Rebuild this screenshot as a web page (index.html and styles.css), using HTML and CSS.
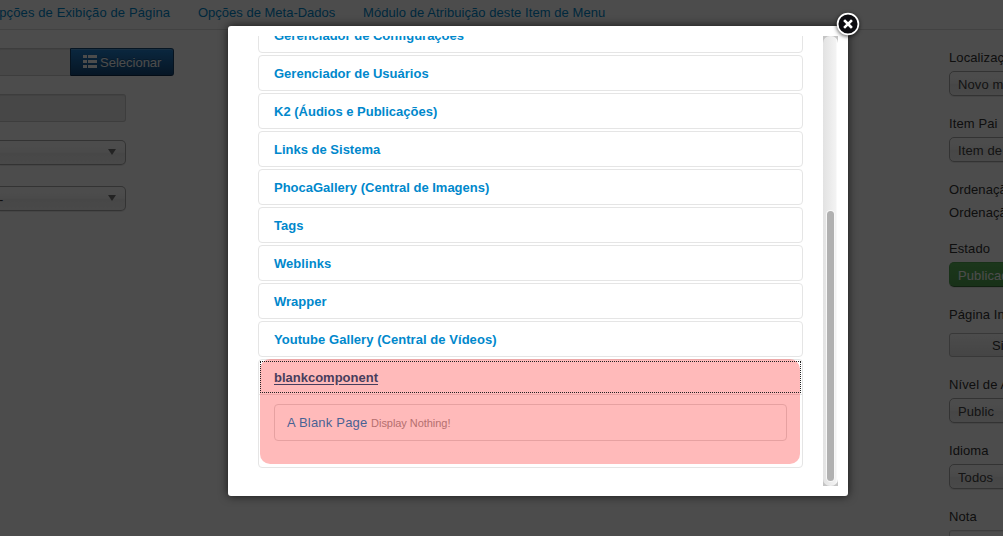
FILE: index.html
```html
<!DOCTYPE html>
<html lang="pt-BR">
<head>
<meta charset="utf-8">
<title>Gerenciador de Menus</title>
<link rel="stylesheet" href="styles.css">
</head>
<body>
<div class="page">
  <nav class="tabs">
    <a class="tab tab-display"><span>Opções de Exibição de Página</span></a>
    <a class="tab tab-meta"><span>Opções de Meta-Dados</span></a>
    <a class="tab tab-module"><span>Módulo de Atribuição deste Item de Menu</span></a>
  </nav>
  <div class="columns">
    <main class="fields">
      <div class="group">
        <div class="input group-input"></div>
        <button class="select-btn">
          <svg width="14" height="14" viewBox="0 0 14 14"><path d="M0 0h4v3H0zM5 0h9v3H5zM0 5h4v3H0zM5 5h9v3H5zM0 10h4v3H0zM5 10h9v3H5z"/></svg>
          <span>Selecionar</span>
        </button>
      </div>
      <div class="input disabled"></div>
      <div class="chosen"><i class="caret"></i></div>
      <div class="chosen"><span>-</span><i class="caret"></i></div>
    </main>
    <aside class="side">
      <label>Localização</label><div class="side-select">Novo menu</div>
      <label>Item Pai</label><div class="side-select">Item de Menu</div>
      <label>Ordenação</label><p class="note">Ordenação estará</p>
      <label>Estado</label><div class="side-select green">Publicado</div>
      <label>Página Inicial</label><div class="toggle">Sim</div>
      <label>Nível de Acesso</label><div class="side-select">Public</div>
      <label>Idioma</label><div class="side-select">Todos</div>
      <label>Nota</label><div class="input side-input"></div>
    </aside>
  </div>
</div>
<div class="overlay"></div>
<div class="modal">
  <div class="frame">
    <div class="list">
      <div class="item"><a>Gerenciador de Configurações</a></div>
      <div class="item"><a>Gerenciador de Usuários</a></div>
      <div class="item"><a>K2 (Áudios e Publicações)</a></div>
      <div class="item"><a>Links de Sistema</a></div>
      <div class="item"><a>PhocaGallery (Central de Imagens)</a></div>
      <div class="item"><a class="wide">Tags</a></div>
      <div class="item"><a class="wide">Weblinks</a></div>
      <div class="item"><a>Wrapper</a></div>
      <div class="item"><a class="wide">Youtube Gallery (Central de Vídeos)</a></div>
      <div class="item open">
        <div class="heading"><a>blankcomponent</a></div>
        <div class="body"><div class="choice"><a>A Blank Page</a> <small>Display Nothing!</small></div></div>
        <div class="highlight"></div>
        <div class="focus"></div>
      </div>
    </div>
    <div class="scroll"><div class="track"><div class="thumb"></div></div></div>
  </div>
  <svg class="close" width="30" height="30" viewBox="0 0 30 30"><circle cx="15" cy="15" r="10.4" fill="#0c0c10" stroke="#fff" stroke-width="1.7"/><path d="M12 12l6 6M18 12l-6 6" stroke="#fff" stroke-width="2.6" stroke-linecap="square"/></svg>
</div>
</body>
</html>
```
FILE: styles.css
```css
* { box-sizing: border-box; }
body {
  margin: 0;
  width: 1003px;
  height: 536px;
  overflow: hidden;
  position: relative;
  background: #fff;
  color: #333;
  font: 13px/18px "Liberation Sans", Arial, sans-serif;
}
.page { height: 536px; display: flex; flex-direction: column; overflow: hidden; }
.tabs { display: flex; gap: 28px; height: 30px; flex: none; padding-top: 4px; border-bottom: 1px solid #ddd; margin-left: -11px; letter-spacing: .06px; }
.tab { color: #08c; white-space: nowrap; }
.tab-display { width: 181px; letter-spacing: .12px; }
.tab-meta { width: 137px; letter-spacing: 0; }
.columns { display: flex; justify-content: space-between; flex: 1; min-height: 0; padding-top: 18px; }
.fields { width: 174px; }
.group { display: flex; height: 28px; margin-bottom: 18px; }
.input { background: #eee; border: 1px solid #ccc; box-shadow: inset 0 1px 1px rgba(0, 0, 0, .075); }
.group-input { width: 70px; border-width: 1px 0; }
.select-btn {
  width: 104px; display: flex; align-items: center; gap: 3px; padding: 0 0 0 12px;
  border: 1px solid; border-color: #1a4a76 #15406a #0a2a4c; border-radius: 0 3px 3px 0;
  background: linear-gradient(#2384d3, #15497c); color: #fff; font: inherit;
  box-shadow: inset 0 1px 0 rgba(255, 255, 255, .2); text-shadow: 0 -1px 0 rgba(0, 0, 0, .25);
}
.select-btn svg { fill: #fff; }
.select-btn span { padding-top: 1px; }
.disabled { width: 126px; height: 28px; border-left: 0; border-radius: 0 3px 3px 0; margin-bottom: 18px; }
.chosen {
  width: 126px; height: 25px; margin-bottom: 21px; padding-right: 9px;
  display: flex; align-items: center; border: 1px solid #aaa; border-left: 0; border-radius: 0 5px 5px 0;
  background: linear-gradient(#fff 20%, #f6f6f6 50%, #eee 52%, #f4f4f4);
  box-shadow: 0 1px 1px rgba(0, 0, 0, .1);
}
.chosen span { padding-top: 3px; margin-left: -1px; }
.caret { margin: 0 0 1px auto; border: 4px solid transparent; border-top: 6px solid #777; border-bottom: 0; }
.side { width: 54px; overflow: hidden; white-space: nowrap; letter-spacing: .1px; }
.side label { display: block; height: 18px; padding-top: 1px; margin-bottom: 5px; }
.side-select {
  width: 220px; height: 25px; margin-bottom: 18px; padding-left: 8px; line-height: 25px;
  border: 1px solid #aaa; border-radius: 5px; color: #444;
  background: linear-gradient(#fff 20%, #f6f6f6 50%, #eee 52%, #f4f4f4);
  box-shadow: 0 1px 1px rgba(0, 0, 0, .1);
}
.green { background: linear-gradient(#5bb75b, #51a351); border-color: #51a351 #51a351 #387038; color: #fff; }
.note { height: 18px; padding-top: 1px; margin: 0 0 18px; }
.toggle {
  width: 220px; height: 24px; margin: 10px 0 18px; padding-left: 42px; line-height: 24px;
  border: 1px solid #bbb; border-radius: 3px; background: linear-gradient(#fff, #e6e6e6);
}
.side-input { width: 220px; height: 28px; border-radius: 3px; background: #fff; }
.overlay { position: absolute; inset: 0; background: rgba(0, 0, 0, .7); }
.modal {
  position: absolute; left: 228px; top: 26px; width: 620px; height: 470px; padding: 10px;
  background: #fff; border-radius: 3px; box-shadow: 0 0 10px rgba(0, 0, 0, .7);
}
.frame { height: 450px; display: flex; justify-content: space-between; overflow: hidden; padding-left: 20px; }
.list { width: 545px; margin-top: -19px; flex: none; }
.item { height: 36px; margin-bottom: 2px; border: 1px solid #e5e5e5; border-radius: 4px; padding: 9px 15px; }
.item a { font-weight: bold; color: #08c; white-space: nowrap; }
.item .wide { letter-spacing: .05px; }
.item.open { position: relative; height: 109px; padding: 0; }
.heading { height: 34px; padding: 9px 15px; }
.item .heading a { color: #005580; text-decoration: underline; text-underline-offset: 2px; }
.body { border-top: 1px solid #e5e5e5; padding: 9px 15px; }
.choice { height: 37px; padding: 9px 12px; border: 1px solid #ddd; border-radius: 4px; }
.item .choice a { font-weight: normal; letter-spacing: .2px; }
.choice small { font-size: 11px; color: #999; letter-spacing: -.05px; }
.highlight { position: absolute; left: 1px; top: -1px; width: 540px; height: 105px; border-radius: 10px; background: rgba(255, 0, 0, .27); }
.focus { position: absolute; left: 1px; top: 1px; width: 541px; height: 32px; border: 1px dotted #222; }
.scroll { width: 15px; background: #c4c4c4; }
.track { width: 15px; height: 450px; border-radius: 7px; background: linear-gradient(90deg, #e2e2e2, #f3f3f3 13px, #fff 14px); padding: 175px 4px 4px; }
.thumb { width: 7px; height: 270px; border-radius: 4px; background: #b1b1b1; box-shadow: 0 0 0 1px #f8f8f8; }
.close { position: absolute; right: -15px; top: -17px; filter: drop-shadow(0 1px 2px rgba(0, 0, 0, .7)); }
```
